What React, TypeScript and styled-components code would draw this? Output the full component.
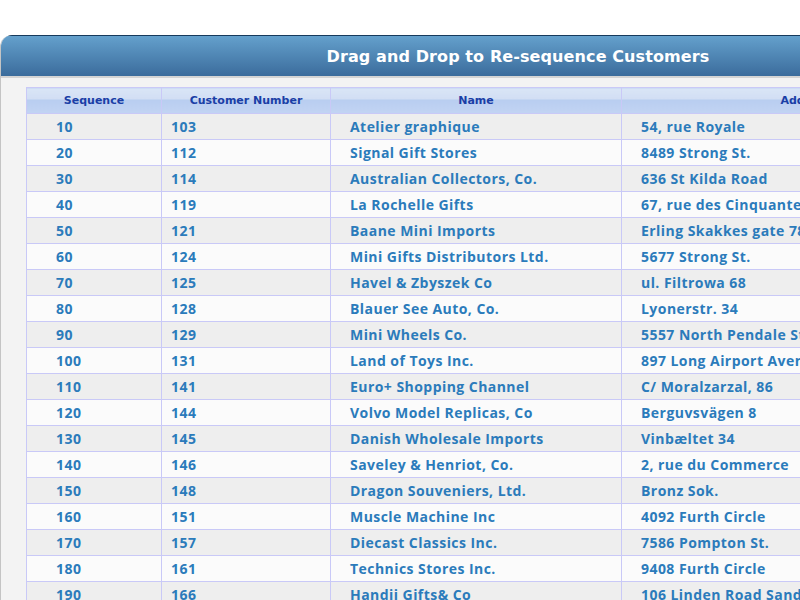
import React from "react";
import styled, { createGlobalStyle } from "styled-components";

const Global = createGlobalStyle`
  html, body { margin: 0; padding: 0; background: #ffffff; overflow: hidden; }
  body { font-family: "DejaVu Sans", sans-serif; }
`;

const Page = styled.div`
  width: 800px;
  height: 600px;
  overflow: hidden;
  padding-top: 35px;
  box-sizing: border-box;
`;

const Panel = styled.div`
  width: 1034px;
  height: 700px;
  border-left: 1px solid #c4c4c4;
  border-top-left-radius: 12px;
  overflow: hidden;
  display: flex;
  flex-direction: column;
  background: linear-gradient(#ffffff 0px, #f3f3f3 40px, #f3f3f3 100%);
`;

const TitleBar = styled.div`
  height: 40px;
  border-top: 1px solid #173a5c;
  border-bottom: 2px solid #d4d4d4;
  background: linear-gradient(#64a0cc, #3b6c9c);
  display: flex;
  align-items: center;
  justify-content: center;
  color: #ffffff;
  font-family: "DejaVu Sans", sans-serif;
  font-weight: bold;
  font-size: 16px;
  letter-spacing: 0.1px;
`;

const Body = styled.div`
  padding: 9px 26px 0 25px;
`;

const Table = styled.table`
  border-collapse: collapse;
  width: 964px;
  table-layout: fixed;
  border: 1px solid #c9c9f7;
`;

const HeadCell = styled.th<{ $w?: number }>`
  width: ${(p) => (p.$w ? `${p.$w}px` : "auto")};
  height: 25px;
  padding: 0;
  border: 1px solid #c9c9f7;
  background: linear-gradient(#d9e5f6 0%, #d2def4 42%, #b8cdf0 43%, #c2d4f3 100%);
  color: #1a3ea6;
  font-family: "DejaVu Sans", sans-serif;
  font-weight: bold;
  font-size: 11px;
  text-align: center;
  vertical-align: middle;
`;

const Row = styled.tr<{ $odd: boolean }>`
  background: ${(p) => (p.$odd ? "#eeeeee" : "#fbfbfb")};
`;

const Cell = styled.td<{ $pad: number }>`
  height: 25px;
  padding: 0 0 0 ${(p) => p.$pad}px;
  border: 1px solid #c9c9f7;
  color: #2b7bbb;
  font-family: "Open Sans", sans-serif;
  font-weight: 700;
  font-size: 14px;
  letter-spacing: 0.45px;
  white-space: nowrap;
  overflow: hidden;
  vertical-align: middle;
`;

const rows: [number, number, string, string][] = [
  [10, 103, "Atelier graphique", "54, rue Royale"],
  [20, 112, "Signal Gift Stores", "8489 Strong St."],
  [30, 114, "Australian Collectors, Co.", "636 St Kilda Road"],
  [40, 119, "La Rochelle Gifts", "67, rue des Cinquante Otages"],
  [50, 121, "Baane Mini Imports", "Erling Skakkes gate 78"],
  [60, 124, "Mini Gifts Distributors Ltd.", "5677 Strong St."],
  [70, 125, "Havel & Zbyszek Co", "ul. Filtrowa 68"],
  [80, 128, "Blauer See Auto, Co.", "Lyonerstr. 34"],
  [90, 129, "Mini Wheels Co.", "5557 North Pendale Street"],
  [100, 131, "Land of Toys Inc.", "897 Long Airport Avenue"],
  [110, 141, "Euro+ Shopping Channel", "C/ Moralzarzal, 86"],
  [120, 144, "Volvo Model Replicas, Co", "Berguvsvägen  8"],
  [130, 145, "Danish Wholesale Imports", "Vinbæltet 34"],
  [140, 146, "Saveley & Henriot, Co.", "2, rue du Commerce"],
  [150, 148, "Dragon Souveniers, Ltd.", "Bronz Sok."],
  [160, 151, "Muscle Machine Inc", "4092 Furth Circle"],
  [170, 157, "Diecast Classics Inc.", "7586 Pompton St."],
  [180, 161, "Technics Stores Inc.", "9408 Furth Circle"],
  [190, 166, "Handji Gifts& Co", "106 Linden Road Sandown"],
  [200, 167, "Herkku Gifts", "Drammensveien 126 A"],
];

export default function App() {
  return (
    <Page>
      <Global />
      <Panel>
        <TitleBar>Drag and Drop to Re-sequence Customers</TitleBar>
        <Body>
          <Table>
            <thead>
              <tr>
                <HeadCell $w={134}>Sequence</HeadCell>
                <HeadCell $w={168}>Customer Number</HeadCell>
                <HeadCell $w={290}>Name</HeadCell>
                <HeadCell>Address</HeadCell>
              </tr>
            </thead>
            <tbody>
              {rows.map((r, i) => (
                <Row key={r[0]} $odd={i % 2 === 0}>
                  <Cell $pad={29}>{r[0]}</Cell>
                  <Cell $pad={9}>{r[1]}</Cell>
                  <Cell $pad={19}>{r[2]}</Cell>
                  <Cell $pad={19}>{r[3]}</Cell>
                </Row>
              ))}
            </tbody>
          </Table>
        </Body>
      </Panel>
    </Page>
  );
}
